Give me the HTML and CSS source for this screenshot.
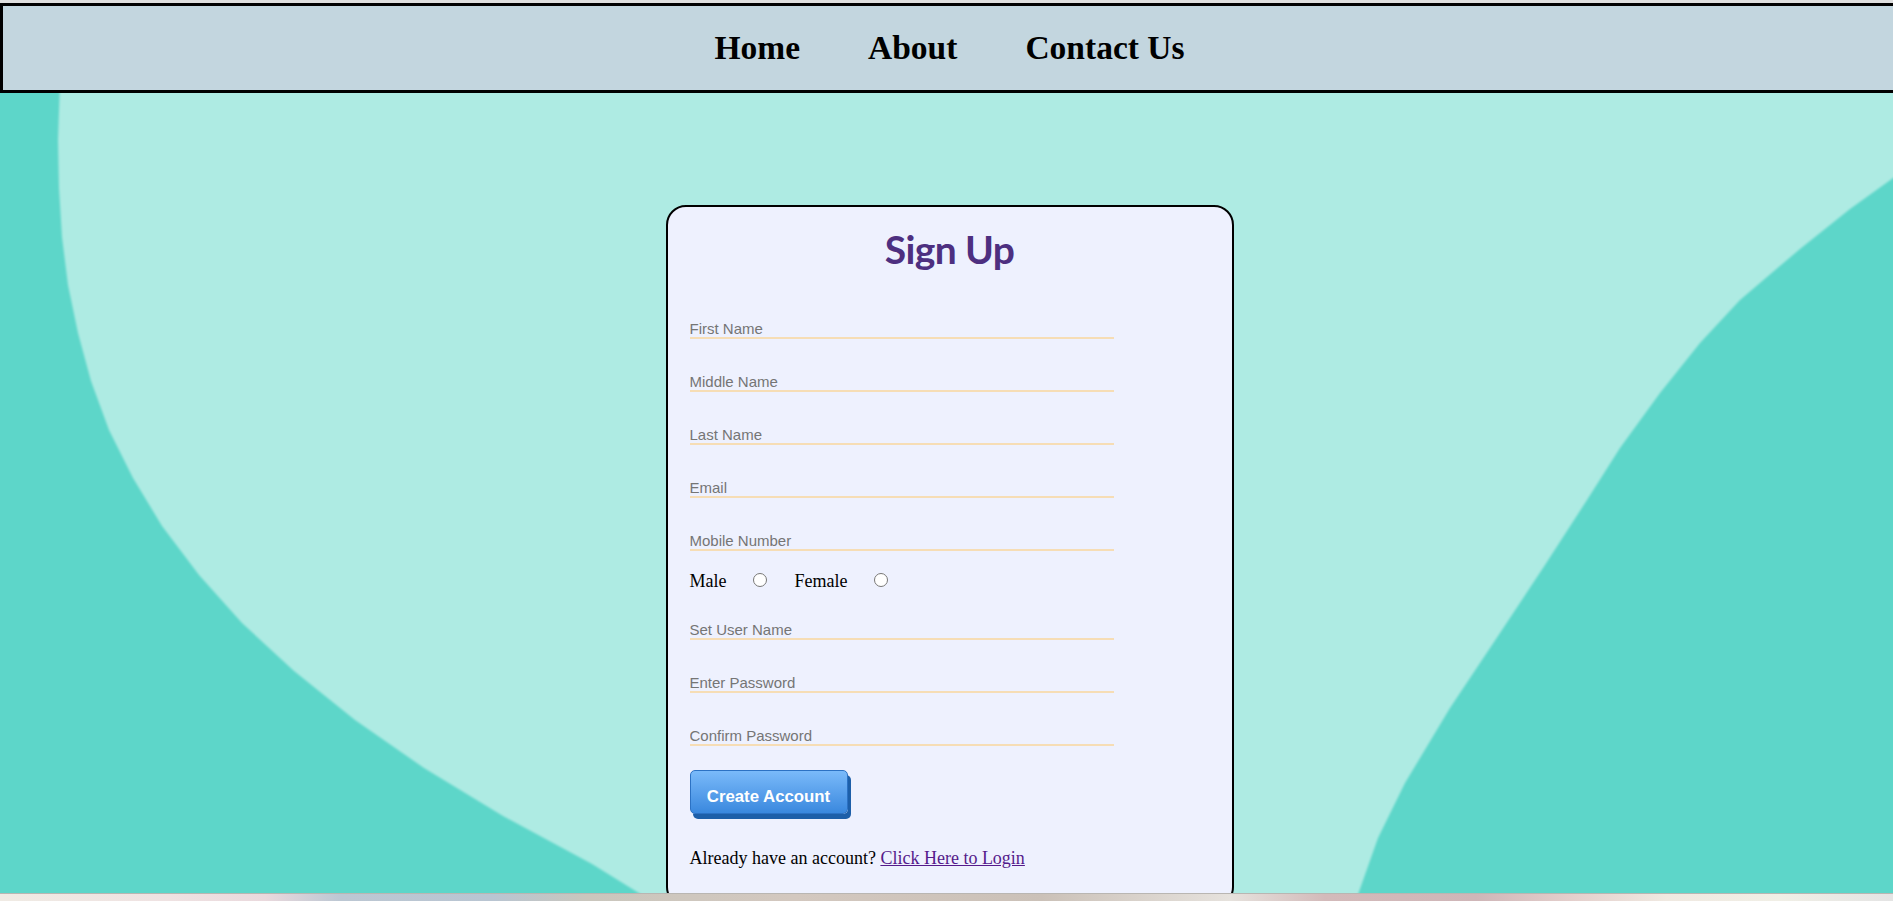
FILE: index.html
```html
<!DOCTYPE html>
<html lang="en">
<head>
<meta charset="utf-8">
<title>Sign Up</title>
<link rel="stylesheet" href="styles.css">
</head>
<body>
<nav class="topnav">
  <a href="#">Home</a>
  <a href="#">About</a>
  <a href="#">Contact Us</a>
</nav>
<main class="stage">
  <svg class="blob" viewBox="0 0 1893 800" preserveAspectRatio="none" aria-hidden="true">
    <defs>
      <filter id="soft" x="-5%" y="-5%" width="110%" height="110%">
        <feGaussianBlur stdDeviation="1.2"/>
      </filter>
    </defs>
    <path filter="url(#soft)" fill="#aeebe3" d="M60 -10 L1900 -10 L1900 80 L1850 116 L1800 156 L1740 207 L1700 250 L1660 300 L1620 355 L1587 407 L1545 472 L1500 540 L1450 615 L1405 690 L1378 745 L1355 810 L655 810 L592 771 L503 723 L424 675 L355 627 L294 578 L242 530 L199 482 L162 433 L133 385 L109 337 L91 288 L78 240 L68 192 L62 144 L59 95 L58 47 Z"/>
  </svg>
  <section class="card">
    <h1 class="title">Sign Up</h1>
    <form class="form">
      <input class="field" type="text" placeholder="First Name">
      <input class="field" type="text" placeholder="Middle Name">
      <input class="field" type="text" placeholder="Last Name">
      <input class="field" type="email" placeholder="Email">
      <input class="field" type="text" placeholder="Mobile Number">
      <div class="gender"><span class="glabel">Male</span><input class="radio" type="radio" name="gender"><span class="glabel">Female</span><input class="radio" type="radio" name="gender"></div>
      <input class="field" type="text" placeholder="Set User Name">
      <input class="field" type="password" placeholder="Enter Password">
      <input class="field" type="password" placeholder="Confirm Password">
      <button class="btn" type="button">Create Account</button>
      <p class="login">Already have an account? <a class="login-link" href="#">Click Here to Login</a></p>
    </form>
  </section>
</main>
<div class="strip"></div>
</body>
</html>
```

FILE: styles.css
```css
html, body {
  margin: 0;
  height: 901px;
  overflow: hidden;
}

body {
  box-sizing: border-box;
  padding-top: 3px;
  background: #dedede;
  font-family: "Liberation Serif", "Times New Roman", serif;
  font-size: 18px;
}

.topnav {
  display: flex;
  justify-content: center;
  align-items: center;
  gap: 68px;
  width: 100%;
  height: 84px;
  border: 3px solid #000;
  background: #c3d6df;
}

.topnav a {
  color: #000;
  text-decoration: none;
  font-weight: 700;
  font-size: 33.5px;
}

.stage {
  position: relative;
  display: flex;
  justify-content: center;
  align-items: flex-start;
  height: 800px;
  padding-left: 6px;
  overflow: hidden;
  background: #5dd6c9;
}

.blob {
  position: absolute;
  top: 0;
  left: 0;
  width: 100%;
  height: 100%;
  z-index: 0;
}

.card {
  position: relative;
  z-index: 1;
  flex: none;
  width: 520px;
  margin-top: 112px;
  padding: 0 22px 36px;
  border: 2px solid #000;
  border-radius: 20px;
  background: #eef1fe;
}

.title {
  margin: 18px 0 0;
  font: 700 39px/48px Lato, "Noto Sans", sans-serif;
  letter-spacing: -0.6px;
  color: #4d2f80;
  text-align: center;
}

.form {
  display: flex;
  flex-direction: column;
  align-items: flex-start;
  padding-top: 13px;
}

.field {
  display: block;
  box-sizing: content-box;
  width: 424px;
  height: 17px;
  margin: 34px 0 0;
  padding: 0;
  border: 0;
  border-bottom: 2px solid #f6ddb5;
  background: transparent;
  font: 15px "Liberation Sans", Arial, sans-serif;
  color: #333;
  outline: none;
}

.field::placeholder {
  color: #757575;
}

.gender {
  margin-top: 19px;
  font-size: 18px;
  line-height: normal;
}

.glabel {
  margin-right: 22px;
}

.radio {
  width: 14px;
  height: 14px;
  margin: 3px 27px 0 5px;
}

.gender + .field {
  margin-top: 29px;
}

.btn {
  box-sizing: border-box;
  margin-top: 24px;
  width: 158px;
  height: 44px;
  padding: 9px 0 0;
  border: 1px solid #2c72c4;
  border-radius: 5px;
  background: linear-gradient(#7abafa, #3a88de);
  box-shadow: 3px 5px 0 #1d5fa9;
  color: #fff;
  font: 700 16.8px "Liberation Sans", Arial, sans-serif;
  cursor: pointer;
}

.login {
  margin: 34px 0 0;
  font-size: 18px;
}

.login-link {
  color: #551a8b;
}

.strip {
  height: 8px;
  border-top: 1px solid #b9b6b2;
  box-sizing: border-box;
  background: linear-gradient(90deg,
    #f0ebe4 0%, #efe2e2 9%, #ead9dd 14%, #bcc7d3 18%, #b9c5d2 26%,
    #cac6bd 31%, #d3c8bf 42%, #cbc1b8 55%, #e6e2dd 65%, #d3baba 70%,
    #cfb6b8 78%, #e4cfcc 83%, #f0e9e1 88%, #f1efe6 94%, #e4e4e4 100%);
}
```
